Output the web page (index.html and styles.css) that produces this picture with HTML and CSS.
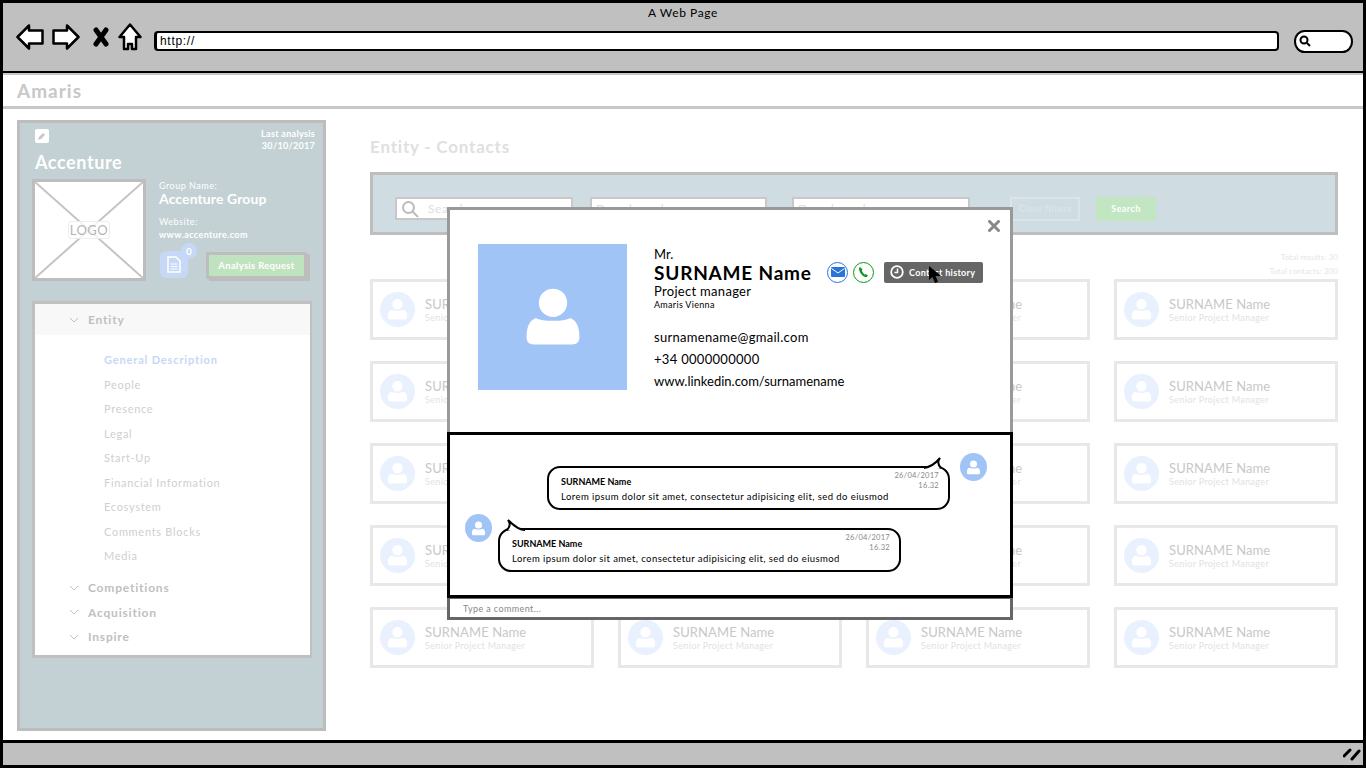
FILE: index.html
```html
<!DOCTYPE html>
<html lang="en">
<head>
    <meta charset="UTF-8">
    <meta name="viewport" content="width=device-width, initial-scale=1.0">
    <title>A Web Page</title>
    <link rel="stylesheet" href="styles.css">
</head>
<body>
    <svg class="defs" width="0" height="0">
        <symbol id="person" viewBox="0 0 36 36">
            <circle cx="18" cy="10.5" r="7.5"/>
            <path d="M9 18.5c3 2 15 2 18 0 3 1 5 4 5 10 0 3-1.500 4-4 4H8c-2.500 0-4-1-4-4 0-6 2-9 5-10z"/>
        </symbol>
    </svg>

    <div class="browser">
        <div class="chrome">
            <div class="chrome-title">A Web Page</div>
            <div class="toolbar">
                <svg class="nav nav-back" width="28" height="26" viewBox="0 0 28 26"><path d="M13 1.500 1.500 13 13 24.500V19.500H26.500V6.500H13z"/></svg>
                <svg class="nav nav-forward" width="28" height="26" viewBox="0 0 28 26"><path d="M15 1.500 26.500 13 15 24.500V19.500H1.500V6.500H15z"/></svg>
                <svg class="nav nav-stop" width="16" height="20" viewBox="0 0 16 20"><path d="M3 3l10 14M13 3 3 17"/></svg>
                <svg class="nav nav-home" width="24" height="28" viewBox="0 0 24 28"><path d="M12 1.500 1.500 14H6v12h4v-5h4v5h4V14h4.500z"/></svg>
                <div class="address">http://</div>
                <div class="chrome-search">
                    <svg width="12" height="12" viewBox="0 0 12 12"><circle cx="5" cy="5" r="3.500"/><path d="M8 8l3 3"/></svg>
                </div>
            </div>
        </div>

        <div class="appbar">Amaris</div>

        <div class="content">
            <aside class="sidebar">
                <div class="side-head">
                    <div>
                        <div class="edit-btn">
                            <svg width="10" height="10" viewBox="0 0 10 10"><path d="M1 9l1-3 4-4 2 2-4 4z"/></svg>
                        </div>
                        <div class="company">Accenture</div>
                    </div>
                    <div class="last-analysis">Last analysis<br>30/10/2017</div>
                </div>
                <div class="company-row">
                    <div class="logo-box">
                        <svg class="logo-cross" width="108" height="96" viewBox="0 0 108 96"><path d="M0 0l108 96M108 0 0 96"/></svg>
                        <span class="logo-label">LOGO</span>
                    </div>
                    <div class="company-info">
                        <div class="info-label">Group Name:</div>
                        <div class="info-name">Accenture Group</div>
                        <div class="info-label info-gap">Website:</div>
                        <div class="info-url">www.accenture.com</div>
                        <div class="info-actions">
                            <div class="doc-btn">
                                <svg width="14" height="17" viewBox="0 0 14 17"><path class="doc-page" d="M1 1h8l4 4v11H1z"/><path class="doc-lines" d="M3.500 8h7M3.500 10.500h7M3.500 13h7"/></svg>
                                <span class="doc-badge">0</span>
                            </div>
                            <div class="analysis-btn">Analysis Request</div>
                        </div>
                    </div>
                </div>

                <div class="tree">
                    <div class="tree-group tree-open"><svg class="chevron" width="10" height="6" viewBox="0 0 10 6"><path d="M1 1l4 4 4-4"/></svg>Entity</div>
                    <ul class="tree-items">
                        <li class="tree-active">General Description</li>
                        <li>People</li>
                        <li>Presence</li>
                        <li>Legal</li>
                        <li>Start-Up</li>
                        <li>Financial Information</li>
                        <li>Ecosystem</li>
                        <li>Comments Blocks</li>
                        <li>Media</li>
                    </ul>
                    <div class="tree-rest">
                        <div class="tree-group"><svg class="chevron" width="10" height="6" viewBox="0 0 10 6"><path d="M1 1l4 4 4-4"/></svg>Competitions</div>
                        <div class="tree-group"><svg class="chevron" width="10" height="6" viewBox="0 0 10 6"><path d="M1 1l4 4 4-4"/></svg>Acquisition</div>
                        <div class="tree-group"><svg class="chevron" width="10" height="6" viewBox="0 0 10 6"><path d="M1 1l4 4 4-4"/></svg>Inspire</div>
                    </div>
                </div>
            </aside>

            <main class="main">
                <h1 class="page-title">Entity - Contacts</h1>
                <div class="filters">
                    <div class="filter-input filter-search">
                        <svg width="18" height="18" viewBox="0 0 18 18"><circle cx="7.500" cy="7.500" r="5.500"/><path d="M11.500 11.500 17 17"/></svg>
                        <span>Search...</span>
                    </div>
                    <div class="filter-input filter-second"><span>Dropdown box</span></div>
                    <div class="filter-input filter-third"><span>Dropdown box</span></div>
                    <div class="clear-btn">Clear filters</div>
                    <div class="search-btn">Search</div>
                </div>
                <div class="totals">Total results: 30<br>Total contacts: 300</div>
                <div class="cards">
                    <div class="card"><div class="card-avatar"><svg width="25" height="25"><use href="#person"/></svg></div><div><div class="card-name">SURNAME Name</div><div class="card-role">Senior Project Manager</div></div></div>
                    <div class="card"><div class="card-avatar"><svg width="25" height="25"><use href="#person"/></svg></div><div><div class="card-name">SURNAME Name</div><div class="card-role">Senior Project Manager</div></div></div>
                    <div class="card"><div class="card-avatar"><svg width="25" height="25"><use href="#person"/></svg></div><div><div class="card-name">SURNAME Name</div><div class="card-role">Senior Project Manager</div></div></div>
                    <div class="card"><div class="card-avatar"><svg width="25" height="25"><use href="#person"/></svg></div><div><div class="card-name">SURNAME Name</div><div class="card-role">Senior Project Manager</div></div></div>
                    <div class="card"><div class="card-avatar"><svg width="25" height="25"><use href="#person"/></svg></div><div><div class="card-name">SURNAME Name</div><div class="card-role">Senior Project Manager</div></div></div>
                    <div class="card"><div class="card-avatar"><svg width="25" height="25"><use href="#person"/></svg></div><div><div class="card-name">SURNAME Name</div><div class="card-role">Senior Project Manager</div></div></div>
                    <div class="card"><div class="card-avatar"><svg width="25" height="25"><use href="#person"/></svg></div><div><div class="card-name">SURNAME Name</div><div class="card-role">Senior Project Manager</div></div></div>
                    <div class="card"><div class="card-avatar"><svg width="25" height="25"><use href="#person"/></svg></div><div><div class="card-name">SURNAME Name</div><div class="card-role">Senior Project Manager</div></div></div>
                    <div class="card"><div class="card-avatar"><svg width="25" height="25"><use href="#person"/></svg></div><div><div class="card-name">SURNAME Name</div><div class="card-role">Senior Project Manager</div></div></div>
                    <div class="card"><div class="card-avatar"><svg width="25" height="25"><use href="#person"/></svg></div><div><div class="card-name">SURNAME Name</div><div class="card-role">Senior Project Manager</div></div></div>
                    <div class="card"><div class="card-avatar"><svg width="25" height="25"><use href="#person"/></svg></div><div><div class="card-name">SURNAME Name</div><div class="card-role">Senior Project Manager</div></div></div>
                    <div class="card"><div class="card-avatar"><svg width="25" height="25"><use href="#person"/></svg></div><div><div class="card-name">SURNAME Name</div><div class="card-role">Senior Project Manager</div></div></div>
                    <div class="card"><div class="card-avatar"><svg width="25" height="25"><use href="#person"/></svg></div><div><div class="card-name">SURNAME Name</div><div class="card-role">Senior Project Manager</div></div></div>
                    <div class="card"><div class="card-avatar"><svg width="25" height="25"><use href="#person"/></svg></div><div><div class="card-name">SURNAME Name</div><div class="card-role">Senior Project Manager</div></div></div>
                    <div class="card"><div class="card-avatar"><svg width="25" height="25"><use href="#person"/></svg></div><div><div class="card-name">SURNAME Name</div><div class="card-role">Senior Project Manager</div></div></div>
                    <div class="card"><div class="card-avatar"><svg width="25" height="25"><use href="#person"/></svg></div><div><div class="card-name">SURNAME Name</div><div class="card-role">Senior Project Manager</div></div></div>
                    <div class="card"><div class="card-avatar"><svg width="25" height="25"><use href="#person"/></svg></div><div><div class="card-name">SURNAME Name</div><div class="card-role">Senior Project Manager</div></div></div>
                    <div class="card"><div class="card-avatar"><svg width="25" height="25"><use href="#person"/></svg></div><div><div class="card-name">SURNAME Name</div><div class="card-role">Senior Project Manager</div></div></div>
                    <div class="card"><div class="card-avatar"><svg width="25" height="25"><use href="#person"/></svg></div><div><div class="card-name">SURNAME Name</div><div class="card-role">Senior Project Manager</div></div></div>
                    <div class="card"><div class="card-avatar"><svg width="25" height="25"><use href="#person"/></svg></div><div><div class="card-name">SURNAME Name</div><div class="card-role">Senior Project Manager</div></div></div>
                </div>
            </main>
        </div>

        <div class="statusbar">
            <svg width="18" height="14" viewBox="0 0 18 14"><path d="M1 9l6-6M9 12l7-8"/></svg>
        </div>

        <!-- contact popup -->
        <div class="modal">
            <div class="modal-top">
                <svg class="modal-close" width="12" height="12" viewBox="0 0 12 12"><path d="M1.500 1.500l9 9M10.500 1.500l-9 9"/></svg>
                <div class="photo"><svg width="68" height="68"><use href="#person"/></svg></div>
                <div class="contact">
                    <div class="contact-title">Mr.</div>
                    <div class="contact-name-row">
                        <div class="contact-name">SURNAME Name</div>
                        <div class="round-icon icon-mail">
                            <svg width="14" height="10" viewBox="0 0 14 10"><rect width="14" height="10" rx="1"/><path d="M0.500 1.500l6.500 4.500 6.500-4.500"/></svg>
                        </div>
                        <div class="round-icon icon-phone">
                            <svg width="11" height="12" viewBox="0 0 11 12"><path d="M2 1 1 2C0.800 4.500 2.300 7.500 4.500 9.500c1.500 1.300 3.200 1.800 4.200 1.500L10 9.800 8 8 6.800 8.800C5.500 7.800 4.200 6 3.800 4.300L4.600 3.400z"/></svg>
                        </div>
                        <div class="history-btn">
                            <svg width="14" height="14" viewBox="0 0 14 14"><circle cx="7" cy="7" r="5.800"/><path d="M7.500 3.500v4H4.500"/></svg>
                            Contact history
                        </div>
                    </div>
                    <div class="contact-job">Project manager</div>
                    <div class="contact-office">Amaris Vienna</div>
                    <div class="contact-lines">
                        <div>surnamename@gmail.com</div>
                        <div>+34 0000000000</div>
                        <div class="contact-link">www.linkedin.com/surnamename</div>
                    </div>
                </div>
                <svg class="cursor" width="13" height="18" viewBox="0 0 13 18"><path d="M0 0v14l3.500-3 2.500 6 3-1.300-2.500-5.700H12z"/></svg>
            </div>
            <div class="chat">
                <div class="chat-row chat-right">
                    <div class="bubble">
                        <svg class="tail tail-right" width="20" height="13" viewBox="0 0 20 13"><path d="M1 12C8 11 12 8 17 2c-3 4-2 7 1 10"/></svg>
                        <div class="bubble-head">
                            <div class="bubble-name">SURNAME Name</div>
                            <div class="bubble-date">26/04/2017<br>16.32</div>
                        </div>
                        <div class="bubble-text">Lorem ipsum dolor sit amet, consectetur adipisicing elit, sed do eiusmod</div>
                    </div>
                    <div class="chat-avatar"><svg width="17" height="17"><use href="#person"/></svg></div>
                </div>
                <div class="chat-row chat-left">
                    <div class="chat-avatar"><svg width="17" height="17"><use href="#person"/></svg></div>
                    <div class="bubble">
                        <svg class="tail tail-left" width="20" height="13" viewBox="0 0 20 13"><path d="M19 12C13 12 8 8 2 2c3 4 2 7-1 10"/></svg>
                        <div class="bubble-head">
                            <div class="bubble-name">SURNAME Name</div>
                            <div class="bubble-date">26/04/2017<br>16.32</div>
                        </div>
                        <div class="bubble-text">Lorem ipsum dolor sit amet, consectetur adipisicing elit, sed do eiusmod</div>
                    </div>
                </div>
            </div>
            <div class="comment">Type a comment...</div>
        </div>
    </div>
</body>
</html>
```

FILE: styles.css
```css
* {
    box-sizing: border-box;
}
body {
    margin: 0;
    font-family: Lato, "Open Sans", sans-serif;
    background: white;
}
.defs {
    position: absolute;
}
.browser {
    position: relative;
    display: flex;
    flex-direction: column;
    width: 1366px;
    height: 768px;
    border: 3px solid #000;
    overflow: hidden;
}

/* browser chrome */
.chrome {
    height: 70px;
    background: #c0c0c0;
    border-bottom: 2px solid #000;
}
.chrome-title {
    padding-top: 3px;
    line-height: 14px;
    height: 17px;
    text-align: center;
    font-size: 12px;
    color: #000;
    letter-spacing: 0.6px;
}
.toolbar {
    display: flex;
    align-items: center;
    height: 32px;
    margin-top: 5px;
    padding-left: 13px;
}
.toolbar svg {
    flex: none;
}
.nav {
    margin-bottom: 9px;
}
.nav-back path, .nav-forward path, .nav-home path {
    fill: white;
    stroke: #000;
    stroke-width: 2.500;
    stroke-linejoin: round;
}
.nav-stop path {
    fill: none;
    stroke: #000;
    stroke-width: 5;
    stroke-linecap: round;
}
.nav-forward {
    margin-left: 8px;
}
.nav-stop {
    margin-left: 13px;
}
.nav-home {
    margin-left: 9px;
}
.address {
    width: 1125px;
    height: 20px;
    margin-left: 12px;
    padding-left: 3px;
    background: white;
    border: 2px solid #000;
    border-left-width: 3px;
    border-radius: 4px;
    font-family: "Liberation Sans", sans-serif;
    font-size: 12px;
    line-height: 17px;
    letter-spacing: 0.7px;
    color: #000;
}
.chrome-search {
    display: flex;
    align-items: center;
    width: 59px;
    height: 23px;
    margin-left: 15px;
    padding-left: 3px;
    background: white;
    border: 2px solid #000;
    border-radius: 11px / 12px;
}
.chrome-search circle, .chrome-search path {
    fill: none;
    stroke: #000;
    stroke-width: 2;
}
.appbar {
    height: 36px;
    padding-left: 14px;
    background: white;
    border-top: 2px solid #c8c8c8;
    border-bottom: 3px solid #c8c8c8;
    font-size: 19px;
    font-weight: 700;
    line-height: 31px;
    letter-spacing: 1px;
    color: #c8c8c8;
}
.content {
    display: flex;
    flex: 1;
    padding: 11px 25px 9px 14px;
}
.statusbar {
    display: flex;
    align-items: center;
    justify-content: flex-end;
    height: 25px;
    padding-right: 2px;
    background: #c0c0c0;
    border-top: 3px solid #000;
}
.statusbar path {
    fill: none;
    stroke: #000;
    stroke-width: 3;
    stroke-linecap: round;
}

/* sidebar */
.sidebar {
    width: 309px;
    padding: 6px 11px 0 12px;
    background: #c3d1d4;
    border: 3px solid #bdbdbd;
}
.side-head {
    display: flex;
    justify-content: space-between;
    color: white;
}
.edit-btn {
    display: flex;
    align-items: center;
    justify-content: center;
    width: 14px;
    height: 14px;
    margin-left: 3px;
    background: white;
    border-radius: 2px;
}
.edit-btn path {
    fill: #c8c8c8;
}
.company {
    margin: 8px 0 6px 3px;
    font-size: 18px;
    font-weight: 700;
    line-height: 22px;
    letter-spacing: 0.6px;
}
.last-analysis {
    margin: -1px -3px 0 0;
    font-size: 9px;
    line-height: 12px;
    text-align: right;
    letter-spacing: 0.3px;
    font-weight: 700;
}
.company-row {
    display: flex;
}
.logo-box {
    position: relative;
    display: flex;
    flex: none;
    align-items: center;
    justify-content: center;
    width: 114px;
    height: 102px;
    background: white;
    border: 3px solid #bdbdbd;
}
.logo-cross {
    position: absolute;
    left: 0;
    top: 0;
}
.logo-cross path {
    fill: none;
    stroke: #c4c4c4;
    stroke-width: 2;
}
.logo-label {
    position: relative;
    padding: 1px 1px;
    background: rgba(255, 255, 255, 0.8);
    border: 1px solid #eee;
    border-radius: 3px;
    font-size: 13px;
    line-height: 14px;
    letter-spacing: 0.5px;
    color: #b5b5b5;
}
.company-info {
    margin-left: 13px;
    padding-top: 1px;
    color: white;
}
.info-label {
    font-size: 9px;
    line-height: 12px;
    letter-spacing: 0.5px;
    color: white;
}
.info-gap {
    margin-top: 10px;
}
.info-name {
    font-size: 14px;
    font-weight: 700;
    line-height: 14px;
    letter-spacing: 0.1px;
}
.info-url {
    margin-top: 1px;
    font-size: 9px;
    font-weight: 700;
    line-height: 12px;
    letter-spacing: 0.4px;
}
.info-actions {
    display: flex;
    align-items: flex-start;
    margin-top: 10px;
}
.doc-btn {
    position: relative;
    display: flex;
    align-items: center;
    justify-content: center;
    width: 28px;
    height: 27px;
    margin-left: 1px;
    background: #c6d8f5;
    border-radius: 6px;
}
.doc-page {
    fill: none;
    stroke: white;
    stroke-width: 1.500;
}
.doc-lines {
    fill: none;
    stroke: white;
}
.doc-badge {
    position: absolute;
    top: -8px;
    right: -9px;
    width: 16px;
    height: 16px;
    background: #c6d8f5;
    border-radius: 50%;
    font-size: 10px;
    font-weight: 700;
    line-height: 16px;
    text-align: center;
    color: white;
}
.analysis-btn {
    width: 101px;
    height: 27px;
    margin: 1px 0 0 18px;
    background: #bfe2bf;
    border: 3px solid #bdbdbd;
    box-shadow: 3px 2px 0 #bdbdbd;
    font-size: 9.500px;
    font-weight: 700;
    line-height: 21px;
    text-align: center;
    letter-spacing: 0.3px;
    color: white;
    white-space: nowrap;
}
.tree {
    height: 357px;
    margin-top: 20px;
    background: white;
    border: 3px solid #c0c0c0;
    border-right-width: 2px;
}
.tree-group {
    display: flex;
    align-items: center;
    padding-left: 34px;
    height: 24.500px;
    font-size: 12px;
    font-weight: 700;
    letter-spacing: 0.8px;
    color: #c0c0c0;
}
.tree-open {
    height: 31px;
    background: #f8f8f8;
}
.chevron {
    margin-right: 9px;
}
.chevron path {
    fill: none;
    stroke: #c0c0c0;
}
.tree-items {
    margin: 13px 0 0;
    padding: 0 0 0 69px;
    list-style: none;
    font-size: 11px;
    line-height: 24.500px;
    letter-spacing: 0.7px;
    color: #cfcfcf;
}
.tree-active {
    font-weight: 700;
    letter-spacing: 0.85px;
    color: #c6d8f5;
}
.tree-rest {
    margin-top: 7px;
}

/* contacts */
.main {
    width: 968px;
    margin-left: 44px;
}
.page-title {
    height: 52px;
    margin: 0;
    padding-top: 17px;
    font-size: 17px;
    font-weight: 700;
    line-height: 20px;
    letter-spacing: 0.8px;
    color: #e0e0e0;
}
.filters {
    display: flex;
    align-items: center;
    height: 63px;
    padding: 10px 0 0 22px;
    background: #cfdce1;
    border: 3px solid #bebebe;
}
.filter-input {
    display: flex;
    align-items: center;
    width: 178px;
    height: 23px;
    padding-left: 4px;
    background: white;
    border: 2px solid #c8c8c8;
    font-size: 12px;
    letter-spacing: 0.6px;
    color: #dedede;
}
.filter-search span {
    margin-left: 9px;
}
.filter-search circle, .filter-search path {
    fill: none;
    stroke: #bbb;
    stroke-width: 2;
}
.filter-second {
    width: 177px;
    margin-left: 17px;
}
.filter-third {
    margin-left: 25px;
}
.clear-btn {
    width: 70px;
    height: 24px;
    margin-left: 40px;
    border: 2px solid #dbe5e8;
    font-size: 9.500px;
    font-weight: 700;
    line-height: 20px;
    text-align: center;
    letter-spacing: 0.3px;
    color: #dbe5e8;
}
.search-btn {
    width: 60px;
    height: 24px;
    margin-left: 16px;
    background: #c1e6c1;
    font-size: 9px;
    font-weight: 700;
    line-height: 24px;
    text-align: center;
    letter-spacing: 0.4px;
    color: white;
}
.totals {
    height: 44px;
    padding-top: 15px;
    font-size: 8px;
    line-height: 14px;
    text-align: right;
    letter-spacing: 0.1px;
    color: #e6e6e6;
}
.cards {
    display: grid;
    grid-template-columns: repeat(4, 224px);
    grid-auto-rows: 61px;
    gap: 21px 24px;
}
.card {
    display: flex;
    align-items: center;
    padding-left: 7px;
    border: 3px solid #e8e8e8;
}
.card-avatar {
    display: flex;
    align-items: center;
    justify-content: center;
    width: 35px;
    height: 35px;
    margin-right: 10px;
    background: #e8f1fd;
    border-radius: 50%;
    fill: white;
}
.card-name {
    font-size: 13px;
    line-height: 15px;
    letter-spacing: 0.1px;
    color: #c8c8c8;
}
.card-role {
    margin-top: 0;
    font-size: 9px;
    line-height: 11px;
    letter-spacing: 0.35px;
    color: #e2e2e2;
}

/* contact popup */
.modal {
    position: absolute;
    left: 444px;
    top: 204px;
    width: 566px;
    height: 413px;
    background: white;
}
.modal-top {
    position: relative;
    display: flex;
    height: 225px;
    padding: 34px 0 0 28px;
    border: 3px solid #999;
    border-bottom: none;
}
.modal-close {
    position: absolute;
    top: 10px;
    right: 10px;
}
.modal-close path {
    fill: none;
    stroke: #888;
    stroke-width: 3;
    stroke-linecap: round;
}
.photo {
    display: flex;
    flex: none;
    align-items: center;
    justify-content: center;
    width: 149px;
    height: 146px;
    background: #a0c4f6;
    fill: white;
}
.contact {
    margin-left: 27px;
    padding-top: 3px;
    color: #000;
}
.contact-title {
    font-size: 13px;
    line-height: 14px;
}
.contact-name-row {
    display: flex;
    align-items: center;
    height: 22px;
}
.contact-name {
    width: 173px;
    font-size: 19px;
    font-weight: 700;
    letter-spacing: 0.8px;
    white-space: nowrap;
}
.round-icon {
    display: flex;
    align-items: center;
    justify-content: center;
    width: 21px;
    height: 21px;
    margin-right: 5px;
    background: white;
    border: 1.500px solid;
    border-radius: 50%;
}
.icon-mail {
    border-color: #2a73d8;
}
.icon-mail rect {
    fill: #2a73d8;
}
.icon-mail path {
    fill: none;
    stroke: white;
}
.icon-phone {
    border-color: #0a9a1e;
    fill: #0a9a1e;
}
.history-btn {
    display: flex;
    align-items: center;
    width: 99px;
    height: 21px;
    margin-left: 5px;
    padding-left: 6px;
    background: #666;
    border-radius: 2px;
    font-size: 9px;
    font-weight: 700;
    letter-spacing: 0.3px;
    color: white;
    white-space: nowrap;
}
.history-btn svg {
    margin-right: 5px;
}
.history-btn circle {
    fill: none;
    stroke: white;
    stroke-width: 1.800;
}
.history-btn path {
    fill: none;
    stroke: white;
    stroke-width: 1.500;
}
.contact-job {
    font-size: 13px;
    line-height: 16px;
    letter-spacing: 0.3px;
}
.contact-office {
    font-size: 9px;
    line-height: 12px;
    letter-spacing: 0.3px;
}
.contact-lines {
    margin-top: 15px;
    font-size: 13px;
    line-height: 22px;
    letter-spacing: 0.3px;
}
.contact-link {
    letter-spacing: 0;
}
.cursor {
    position: absolute;
    left: 479px;
    top: 56px;
    fill: #000;
}
.chat {
    height: 166px;
    padding-top: 18px;
    border: 3px solid #000;
}
.chat-row {
    display: flex;
    align-items: flex-start;
}
.chat-right {
    justify-content: flex-end;
    padding-right: 23px;
}
.chat-left {
    margin-top: 4px;
    padding-left: 15px;
}
.chat-avatar {
    display: flex;
    flex: none;
    align-items: center;
    justify-content: center;
    width: 27px;
    height: 28px;
    background: #a0c4f6;
    border-radius: 50%;
    fill: white;
}
.bubble {
    position: relative;
    width: 403px;
    height: 44px;
    margin-top: 13px;
    padding: 3px 9px 0 12px;
    background: white;
    border: 2px solid #000;
    border-radius: 13px;
}
.chat-right .bubble {
    margin-right: 10px;
}
.chat-left .bubble {
    margin-top: 14px;
    margin-left: 6px;
}
.tail {
    position: absolute;
    top: -12px;
    overflow: visible;
}
.tail path {
    fill: white;
    stroke: #000;
    stroke-width: 2;
}
.tail-right {
    right: 5px;
}
.tail-left {
    left: 6px;
}
.bubble-head {
    display: flex;
    align-items: center;
    justify-content: space-between;
    height: 20px;
}
.bubble-name {
    font-size: 9px;
    font-weight: 700;
    color: #000;
}
.bubble-date {
    font-size: 7.500px;
    line-height: 10px;
    text-align: right;
    letter-spacing: 0.3px;
    color: #888;
}
.bubble-text {
    font-size: 9.500px;
    line-height: 12px;
    letter-spacing: 0.42px;
    color: #000;
    white-space: nowrap;
}
.comment {
    height: 22px;
    padding-left: 13px;
    border: 3px solid #666;
    border-top-width: 1px;
    font-size: 9px;
    line-height: 19px;
    letter-spacing: 0.4px;
    color: #888;
}
```
